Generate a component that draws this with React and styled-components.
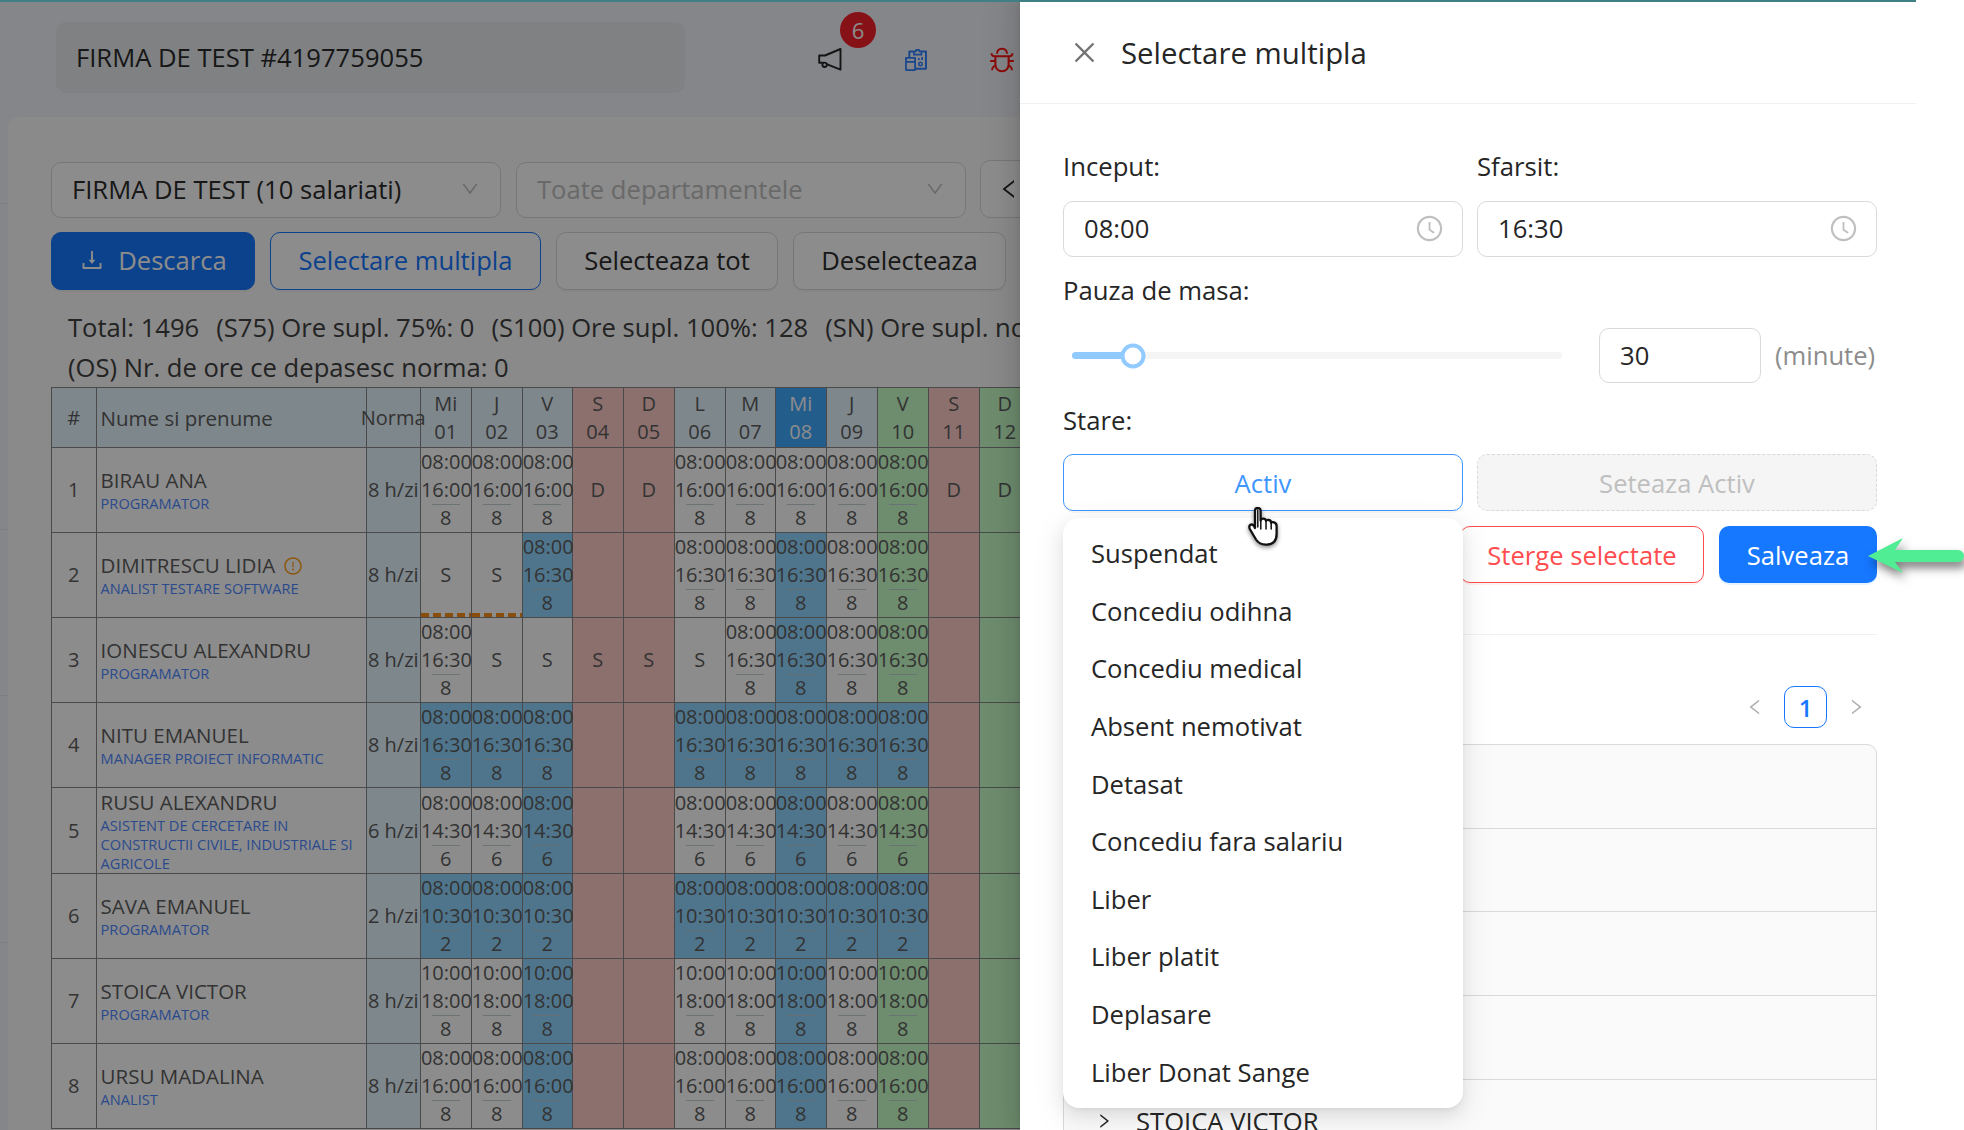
import React from "react";
import styled, { createGlobalStyle } from "styled-components";
import {
  AiOutlineReconciliation,
  AiOutlineBug,
  AiOutlineClose,
  AiOutlineClockCircle,
  AiOutlineDown,
  AiOutlineLeft,
  AiOutlineRight,
  AiOutlineExclamationCircle,
  AiOutlineDownload,
} from "react-icons/ai";

const GlobalStyle = createGlobalStyle`
  html, body { margin: 0; padding: 0; background: #fff; }
  * { box-sizing: border-box; }
  body { font-family: "Open Sans", "Noto Sans", sans-serif; }
`;

const days = [
  ["Mi", "01", "plain"], ["J", "02", "plain"], ["V", "03", "plain"], ["S", "04", "off"],
  ["D", "05", "off"], ["L", "06", "plain"], ["M", "07", "plain"], ["Mi", "08", "today"],
  ["J", "09", "plain"], ["V", "10", "green"], ["S", "11", "off"], ["D", "12", "green"],
];
const dayWidths = [50.8, 51, 50, 51, 51, 51, 50, 51, 51, 51, 51, 51];

const t = (from, to, hours, selected) => ({ from, to, hours, selected });

function week(from, to, hours, selectedAll) {
  // zile lucratoare, restul completat de rand
  const make = (i) => t(from, to, hours, selectedAll || i === 2 || i === 7);
  return [make(0), make(1), make(2), null, null, make(5), make(6), make(7), make(8), make(9), null, null];
}

const row1 = week("08:00", "16:00", "8", false).map((c) => (c ? { ...c, selected: false } : "D"));
const row2 = week("08:00", "16:30", "8", false);
row2[0] = { letter: "S", dashed: true };
row2[1] = { letter: "S", dashed: true };
const row3 = week("08:00", "16:30", "8", false);
row3[1] = "S"; row3[2] = "S"; row3[3] = "S"; row3[4] = "S"; row3[5] = "S";

const employees = [
  { name: "BIRAU ANA", job: "PROGRAMATOR", norm: "8 h/zi", cells: row1 },
  { name: "DIMITRESCU LIDIA", warn: true, job: "ANALIST TESTARE SOFTWARE", norm: "8 h/zi", cells: row2 },
  { name: "IONESCU ALEXANDRU", job: "PROGRAMATOR", norm: "8 h/zi", cells: row3 },
  { name: "NITU EMANUEL", job: "MANAGER PROIECT INFORMATIC", norm: "8 h/zi", cells: week("08:00", "16:30", "8", true) },
  { name: "RUSU ALEXANDRU", job: "ASISTENT DE CERCETARE IN CONSTRUCTII CIVILE, INDUSTRIALE SI AGRICOLE", norm: "6 h/zi", cells: week("08:00", "14:30", "6", false), tall: true },
  { name: "SAVA EMANUEL", job: "PROGRAMATOR", norm: "2 h/zi", cells: week("08:00", "10:30", "2", true) },
  { name: "STOICA VICTOR", job: "PROGRAMATOR", norm: "8 h/zi", cells: week("10:00", "18:00", "8", false) },
  { name: "URSU MADALINA", job: "ANALIST", norm: "8 h/zi", cells: week("08:00", "16:00", "8", false) },
];

const statuses = [
  "Suspendat", "Concediu odihna", "Concediu medical", "Absent nemotivat", "Detasat",
  "Concediu fara salariu", "Liber", "Liber platit", "Deplasare", "Liber Donat Sange",
];

const collapseNames = ["IONESCU ALEXANDRU", "NITU EMANUEL", "RUSU ALEXANDRU", "SAVA EMANUEL", "STOICA VICTOR"];

const headBg = { plain: "#e6f6ff", off: "#ffccc7", today: "#40a9ff", green: "#c8ffc8" };
const cellBg = { plain: "#ffffff", off: "#ffccc7", today: "#ffffff", green: "#c8ffc8" };

export default function App() {
  return (
    <Root>
      <GlobalStyle />
      <Stage>
        <Page>
          <SideStub>
            <SideLine $gap={203} />
            <SideLine $gap={325} />
            <SideLine $gap={165} />
            <SideLine $gap={246} />
          </SideStub>
          <Content>
            <TopBar>
              <CompanyBox>FIRMA DE TEST #4197759055</CompanyBox>
              <TopIcon $color="#262626" $left={133}>
                <svg width="24" height="23" viewBox="0 0 24 23" fill="none" stroke="currentColor" strokeWidth="1.9" strokeLinejoin="round">
                  <path d="M22.5 1L7 7.5H1.2V14.8H5.5L22.5 21.6Z" />
                  <circle cx="6.6" cy="16.8" r="2.2" fill="#e7ebee" />
                </svg>
                <Badge>6</Badge>
              </TopIcon>
              <TopIcon $color="#2f80ff" $left={60}>
                <AiOutlineReconciliation />
              </TopIcon>
              <TopIcon $color="#ff1616" $left={58}>
                <AiOutlineBug />
              </TopIcon>
            </TopBar>

            <Card>
              <FilterRow>
                <FakeSelect>
                  FIRMA DE TEST (10 salariati)
                  <AiOutlineDown />
                </FakeSelect>
                <FakeSelect $placeholder>
                  Toate departamentele
                  <AiOutlineDown />
                </FakeSelect>
                <NavButton>
                  <AiOutlineLeft />
                </NavButton>
              </FilterRow>

              <ButtonRow>
                <ActionButton $kind="primary" $width={204}>
                  <AiOutlineDownload />
                  Descarca
                </ActionButton>
                <ActionButton $kind="outline" $width={271}>Selectare multipla</ActionButton>
                <ActionButton $width={222}>Selecteaza tot</ActionButton>
                <ActionButton $width={213}>Deselecteaza</ActionButton>
              </ButtonRow>

              <Stats>
                <StatLine>
                  <span>Total: 1496</span>
                  <span>(S75) Ore supl. 75%: 0</span>
                  <span>(S100) Ore supl. 100%: 128</span>
                  <span>(SN) Ore supl. noapte: 0</span>
                </StatLine>
                <StatLine>
                  <span>(OS) Nr. de ore ce depasesc norma: 0</span>
                </StatLine>
              </Stats>

              <Table>
                <colgroup>
                  <col style={{ width: 44.6 }} />
                  <col style={{ width: 270 }} />
                  <col style={{ width: 54.3 }} />
                  {dayWidths.map((w, i) => (
                    <col key={i} style={{ width: w }} />
                  ))}
                </colgroup>
                <thead>
                  <tr>
                    <HeadCell $bg={headBg.plain}>#</HeadCell>
                    <HeadCell $bg={headBg.plain} $left>Nume si prenume</HeadCell>
                    <HeadCell $bg={headBg.plain}><Overflowing>Norma</Overflowing></HeadCell>
                    {days.map(([letter, num, kind]) => (
                      <HeadCell key={num} $bg={headBg[kind]} $today={kind === "today"}>
                        <div>{letter}</div>
                        <div>{num}</div>
                      </HeadCell>
                    ))}
                  </tr>
                </thead>
                <tbody>
                  {employees.map((emp, index) => (
                    <BodyRow key={emp.name} $tall={emp.tall}>
                      <IndexCell>{index + 1}</IndexCell>
                      <NameCell>
                        <EmployeeName>
                          {emp.name}
                          {emp.warn && <WarnIcon><AiOutlineExclamationCircle /></WarnIcon>}
                        </EmployeeName>
                        <JobTitle>{emp.job}</JobTitle>
                      </NameCell>
                      <NormCell>{emp.norm}</NormCell>
                      {emp.cells.map((cell, i) => (
                        <DayCell key={i} cell={cell} kind={days[i][2]} />
                      ))}
                    </BodyRow>
                  ))}
                </tbody>
              </Table>
            </Card>
          </Content>
        </Page>

        <Mask />

        <Drawer>
          <DrawerHeader>
            <CloseIcon><AiOutlineClose /></CloseIcon>
            <DrawerTitle>Selectare multipla</DrawerTitle>
          </DrawerHeader>
          <DrawerBody>
            <TwoCols>
              <div>
                <FieldLabel>Inceput:</FieldLabel>
                <TimeField>08:00<AiOutlineClockCircle /></TimeField>
              </div>
              <div>
                <FieldLabel>Sfarsit:</FieldLabel>
                <TimeField>16:30<AiOutlineClockCircle /></TimeField>
              </div>
            </TwoCols>

            <FieldLabel $top={17}>Pauza de masa:</FieldLabel>
            <SliderRow>
              <Rail>
                <RailFill style={{ width: "12.4%" }} />
                <Handle style={{ left: "12.4%" }} />
              </Rail>
              <NumberField>30</NumberField>
              <Unit>(minute)</Unit>
            </SliderRow>

            <FieldLabel $top={21}>Stare:</FieldLabel>
            <StateRow>
              <SelectWrap>
                <ActiveSelect>Activ</ActiveSelect>
                <Dropdown>
                  {statuses.map((s) => (
                    <DropItem key={s}>{s}</DropItem>
                  ))}
                </Dropdown>
              </SelectWrap>
              <DisabledButton>Seteaza Activ</DisabledButton>
            </StateRow>

            <DrawerActions>
              <DangerButton>Sterge selectate</DangerButton>
              <SaveButton>Salveaza</SaveButton>
            </DrawerActions>

            <Divider />

            <Pagination>
              <PageArrow><AiOutlineLeft /></PageArrow>
              <PageNumber>1</PageNumber>
              <PageArrow><AiOutlineRight /></PageArrow>
            </Pagination>

            <Collapse>
              {collapseNames.map((n) => (
                <CollapseRow key={n}>
                  <AiOutlineRight />
                  <span>{n}</span>
                </CollapseRow>
              ))}
            </Collapse>
          </DrawerBody>
        </Drawer>

        <TopStripe />
      </Stage>

      <Cursor viewBox="0 0 31 40" fill="none">
        <path
          d="M7 3.5Q7 1 9.8 1Q12.6 1 12.6 3.5V13.5Q13 11.6 15.3 11.6Q17.6 11.6 18 13.8Q18.6 12.6 20.8 13Q23 13.4 23.2 15.8Q24 14.8 26 15.4Q28.6 16.2 28.6 19V27Q28.6 37 19 37.6Q11.5 38 8 32.5L1.8 22Q.6 19 2.4 17.8Q4.4 16.8 6 19L7 21Z"
          fill="#fff"
          stroke="#111"
          strokeWidth="2.3"
          strokeLinejoin="round"
        />
        <path d="M12.8 13V22M18 14V22M23.2 16V22M9.8 3V20" stroke="#111" strokeWidth="1.5" strokeLinecap="round" />
      </Cursor>

      <Arrow viewBox="0 0 96 35">
        <path d="M0 18L35 0L27 12H90A6 6 0 0 1 90 24H27L35 35Z" fill="#50ed94" />
      </Arrow>
    </Root>
  );
}

function DayCell({ cell, kind }) {
  const base = cellBg[kind];
  if (cell === null || cell === undefined) return <Cell $bg={base} />;
  if (typeof cell === "string") return <Cell $bg={base}>{cell}</Cell>;
  if (cell.letter) return <Cell $bg={base} $dashed={cell.dashed}>{cell.letter}</Cell>;
  return (
    <Cell $bg={cell.selected ? "#91d5ff" : base}>
      <div>{cell.from}</div>
      <div>{cell.to}</div>
      <HoursLine />
      <div>{cell.hours}</div>
    </Cell>
  );
}

const mainFont = "25.6px";

/*
Frame Part
*/
const Root = styled.div`
  position: relative;
  width: 1964px;
  height: 1130px;
  overflow: hidden;
  background: #fff;
`;

const Stage = styled.div`
  position: relative;
  width: 1916px;
  height: 1130px;
  overflow: hidden;
`;

const Page = styled.div`
  display: flex;
  height: 100%;
  background: #f2f5f9;
`;

const SideStub = styled.div`
  width: 8px;
  flex-shrink: 0;
`;

const SideLine = styled.div`
  height: 1px;
  margin-top: ${(p) => p.$gap}px;
  background: #e4e6e8;
`;

const Content = styled.div`
  flex: 1;
  min-width: 0;
  display: flex;
  flex-direction: column;
`;

const TopBar = styled.div`
  height: 117px;
  padding: 22px 0 24px 48px;
  display: flex;
  align-items: center;
  flex-shrink: 0;
`;

const CompanyBox = styled.div`
  width: 629px;
  height: 71px;
  padding: 0 0 0 20px;
  display: flex;
  align-items: center;
  border-radius: 10px;
  background: #e7ebee;
  color: #2a2a2a;
  font-size: ${mainFont};
`;

const TopIcon = styled.div`
  position: relative;
  margin-left: ${(p) => p.$left}px;
  margin-top: 4px;
  display: flex;
  color: ${(p) => p.$color};
  font-size: 28px;
`;

const Badge = styled.div`
  position: absolute;
  left: 22px;
  top: -36px;
  width: 36px;
  height: 36px;
  border-radius: 50%;
  background: #f5222d;
  color: #fff;
  display: flex;
  align-items: center;
  justify-content: center;
  font-size: 22px;
`;

const Card = styled.div`
  flex: 1;
  min-height: 0;
  padding: 43px 0 0 43px;
  background: #fbfbfb;
  border-radius: 10px 0 0 0;
  overflow: hidden;
`;

const FilterRow = styled.div`
  display: flex;
  align-items: flex-end;
  gap: 15px;
`;

const FakeSelect = styled.div`
  width: 450px;
  height: 56px;
  flex-shrink: 0;
  padding: 0 20px 2px 20px;
  display: flex;
  align-items: center;
  justify-content: space-between;
  border: 1px solid #d9d9d9;
  border-radius: 10px;
  background: #fff;
  color: ${(p) => (p.$placeholder ? "#bfbfbf" : "#2c2c2c")};
  font-size: ${mainFont};
  white-space: nowrap;

  svg {
    font-size: 20px;
    color: #bfbfbf;
  }
`;

const NavButton = styled.div`
  width: 60px;
  height: 58px;
  margin-left: -1px;
  padding-left: 16px;
  flex-shrink: 0;
  display: flex;
  align-items: center;
  border: 1px solid #d9d9d9;
  border-radius: 10px;
  background: #fff;
  color: #262626;
  font-size: 24px;
`;

const ButtonRow = styled.div`
  margin-top: 14px;
  display: flex;
  gap: 15px;
`;

const ActionButton = styled.div`
  width: ${(p) => p.$width}px;
  height: 58px;
  padding-bottom: 2px;
  flex-shrink: 0;
  display: flex;
  align-items: center;
  justify-content: center;
  gap: 13px;
  border-radius: 10px;
  font-size: ${mainFont};
  white-space: nowrap;
  border: 1px solid ${(p) => (p.$kind === "primary" ? "#1677ff" : p.$kind === "outline" ? "#1677ff" : "#d9d9d9")};
  background: ${(p) => (p.$kind === "primary" ? "#1677ff" : "#fff")};
  color: ${(p) => (p.$kind === "primary" ? "#fff" : p.$kind === "outline" ? "#1677ff" : "#2c2c2c")};
  box-shadow: 0 2px 0 rgba(0, 0, 0, 0.03);

  svg {
    font-size: 26px;
  }
`;

const Stats = styled.div`
  margin-top: 18px;
  height: 79px;
  padding-left: 17px;
`;

const StatLine = styled.div`
  display: flex;
  gap: 17px;
  height: 40px;
  line-height: 40px;
  font-size: ${mainFont};
  color: #404040;
  white-space: nowrap;
`;

/*
Table Part
*/
const Table = styled.table`
  table-layout: fixed;
  width: 978px;
  border-collapse: collapse;
  font-size: 20px;
  line-height: 28px;
  color: #5d5d5d;
`;

const HeadCell = styled.th`
  height: 60px;
  padding: 0 ${(p) => (p.$left ? "4px" : "0")};
  border: 1px solid #888;
  background: ${(p) => p.$bg};
  color: ${(p) => (p.$today ? "#fff" : "#5d5d5d")};
  font-weight: 400;
  font-size: ${(p) => (p.$left ? "20.5px" : "20px")};
  text-align: ${(p) => (p.$left ? "left" : "center")};
  white-space: nowrap;
`;

const Overflowing = styled.span`
  display: block;
  margin: 0 -8px;
`;

const BodyRow = styled.tr`
  height: ${(p) => (p.$tall ? 86 : 85)}px;
`;

const IndexCell = styled.td`
  padding: 0;
  border: 1px solid #888;
  background: #fff;
  text-align: center;
`;

const NameCell = styled.td`
  padding: 0 4px;
  border: 1px solid #888;
  background: #fff;
`;

const EmployeeName = styled.div`
  display: flex;
  align-items: center;
  gap: 8px;
  font-size: 20.5px;
  line-height: 27px;
`;

const WarnIcon = styled.span`
  display: flex;
  color: #ff9f1c;
  font-size: 20px;
`;

const JobTitle = styled.div`
  font-size: 14.6px;
  line-height: 19px;
  color: #4f88ff;
`;

const NormCell = styled.td`
  padding: 0;
  border: 1px solid #888;
  background: #e6f6ff;
  text-align: center;
  white-space: nowrap;
`;

const Cell = styled.td`
  padding: 0;
  border: 1px solid #888;
  text-align: center;
  vertical-align: middle;
  white-space: nowrap;
  background: ${(p) =>
    p.$dashed
      ? `repeating-linear-gradient(90deg, #fa8c16 0 8px, transparent 8px 12px) bottom / 100% 4px no-repeat, ${p.$bg}`
      : p.$bg};
`;

const HoursLine = styled.div`
  width: 28px;
  height: 1px;
  margin: 0 auto -1px;
  background: rgba(190, 205, 210, 0.9);
`;

const Mask = styled.div`
  position: absolute;
  inset: 0;
  background: rgba(0, 0, 0, 0.45);
`;

const TopStripe = styled.div`
  position: absolute;
  left: 0;
  top: 0;
  right: 0;
  height: 2px;
  background: #3f8085;
`;

/*
Drawer Part
*/
const Drawer = styled.div`
  position: absolute;
  left: 1020px;
  top: 0;
  bottom: 0;
  width: 896px;
  background: #fff;
  box-shadow: -6px 0 16px rgba(0, 0, 0, 0.08), -3px 0 6px -4px rgba(0, 0, 0, 0.12), -9px 0 28px 8px rgba(0, 0, 0, 0.05);
`;

const DrawerHeader = styled.div`
  height: 104px;
  padding: 2px 0 0 50px;
  display: flex;
  align-items: center;
  gap: 22px;
  border-bottom: 1px solid #f0f0f0;
`;

const CloseIcon = styled.span`
  display: flex;
  font-size: 29px;
  color: #737373;
`;

const DrawerTitle = styled.div`
  font-size: 29.4px;
  color: #262626;
`;

const DrawerBody = styled.div`
  padding: 46px 39px 0 43px;
`;

const TwoCols = styled.div`
  display: grid;
  grid-template-columns: 1fr 1fr;
  gap: 14px;
`;

const FieldLabel = styled.div`
  margin-top: ${(p) => p.$top || 0}px;
  height: 34px;
  line-height: 34px;
  font-size: 25.7px;
  color: #262626;
`;

const TimeField = styled.div`
  margin-top: 17px;
  height: 56px;
  padding: 0 18px 2px 20px;
  display: flex;
  align-items: center;
  justify-content: space-between;
  border: 1px solid #d9d9d9;
  border-radius: 10px;
  font-size: ${mainFont};
  color: #262626;

  svg {
    font-size: 29px;
    color: #bfbfbf;
  }
`;

const SliderRow = styled.div`
  margin-top: 20px;
  display: flex;
  align-items: center;
`;

const Rail = styled.div`
  position: relative;
  width: 490px;
  height: 7px;
  margin: 0 37px 0 9px;
  flex-shrink: 0;
  border-radius: 4px;
  background: #f5f5f5;
`;

const RailFill = styled.div`
  height: 100%;
  border-radius: 4px;
  background: #91caff;
`;

const Handle = styled.div`
  position: absolute;
  top: 50%;
  width: 25px;
  height: 25px;
  transform: translate(-50%, -50%);
  border: 4px solid #91caff;
  border-radius: 50%;
  background: #fff;
`;

const NumberField = styled.div`
  width: 162px;
  height: 55px;
  padding: 0 0 1px 20px;
  flex-shrink: 0;
  display: flex;
  align-items: center;
  border: 1px solid #d9d9d9;
  border-radius: 10px;
  font-size: ${mainFont};
  color: #262626;
`;

const Unit = styled.div`
  margin-left: 14px;
  font-size: ${mainFont};
  color: #8c8c8c;
  white-space: nowrap;
`;

const StateRow = styled.div`
  margin-top: 16px;
  display: grid;
  grid-template-columns: 1fr 1fr;
  gap: 14px;
`;

const SelectWrap = styled.div`
  position: relative;
  z-index: 3;
`;

const ActiveSelect = styled.div`
  height: 57px;
  padding-top: 2px;
  display: flex;
  align-items: center;
  justify-content: center;
  border: 1px solid #4096ff;
  border-radius: 10px;
  background: #fff;
  color: #4096ff;
  font-size: ${mainFont};
  box-shadow: 0 2px 0 rgba(0, 0, 0, 0.03);
`;

const Dropdown = styled.div`
  position: absolute;
  left: 0;
  right: 0;
  top: 64px;
  padding: 7px 0;
  border-radius: 16px;
  background: #fff;
  box-shadow: 0 6px 16px rgba(0, 0, 0, 0.08), 0 3px 6px -4px rgba(0, 0, 0, 0.12), 0 9px 28px 8px rgba(0, 0, 0, 0.05);
`;

const DropItem = styled.div`
  height: 57.6px;
  padding-left: 28px;
  display: flex;
  align-items: center;
  font-size: ${mainFont};
  color: #262626;
`;

const DisabledButton = styled.div`
  height: 57px;
  padding-top: 2px;
  display: flex;
  align-items: center;
  justify-content: center;
  border: 1px dashed #d9d9d9;
  border-radius: 10px;
  background: #f5f5f5;
  color: #bfbfbf;
  font-size: ${mainFont};
`;

const DrawerActions = styled.div`
  margin-top: 15px;
  display: flex;
  justify-content: flex-end;
  gap: 15px;
`;

const DangerButton = styled.div`
  width: 244px;
  height: 57px;
  padding-top: 2px;
  display: flex;
  align-items: center;
  justify-content: center;
  border: 1px solid #ff4d4f;
  border-radius: 10px;
  background: #fff;
  color: #ff4d4f;
  font-size: ${mainFont};
  box-shadow: 0 2px 0 rgba(255, 38, 5, 0.06);
`;

const SaveButton = styled.div`
  width: 158px;
  height: 57px;
  padding-top: 2px;
  display: flex;
  align-items: center;
  justify-content: center;
  border-radius: 10px;
  background: #1677ff;
  color: #fff;
  font-size: ${mainFont};
  box-shadow: 0 2px 0 rgba(5, 145, 255, 0.1);
`;

const Divider = styled.div`
  margin-top: 51px;
  height: 1px;
  background: #f0f0f0;
`;

const Pagination = styled.div`
  margin-top: 51px;
  display: flex;
  justify-content: flex-end;
  align-items: center;
  gap: 19px;
  padding-right: 11px;
`;

const PageArrow = styled.span`
  display: flex;
  font-size: 20px;
  color: #b0b0b0;
`;

const PageNumber = styled.div`
  width: 43px;
  height: 42px;
  display: flex;
  align-items: center;
  justify-content: center;
  border: 1px solid #1677ff;
  border-radius: 10px;
  color: #1677ff;
  font-size: 24px;
  font-weight: 600;
`;

const Collapse = styled.div`
  margin-top: 16px;
  border: 1px solid #d9d9d9;
  border-radius: 10px;
  background: #fafafa;
`;

const CollapseRow = styled.div`
  height: 83.7px;
  padding-left: 31px;
  display: flex;
  align-items: center;
  gap: 23px;
  border-bottom: 1px solid #d9d9d9;
  font-size: ${mainFont};
  color: #262626;

  svg {
    font-size: 18px;
  }
`;

/*
Overlays
*/
const Cursor = styled.svg`
  position: absolute;
  z-index: 10;
  left: 1248px;
  top: 507px;
  width: 31px;
  height: 40px;
  filter: drop-shadow(0 2px 2px rgba(0, 0, 0, 0.45));
`;

const Arrow = styled.svg`
  position: absolute;
  z-index: 10;
  left: 1868px;
  top: 538px;
  width: 96px;
  height: 35px;
  overflow: visible;
  filter: drop-shadow(3px 6px 5px rgba(0, 0, 0, 0.5));
`;
